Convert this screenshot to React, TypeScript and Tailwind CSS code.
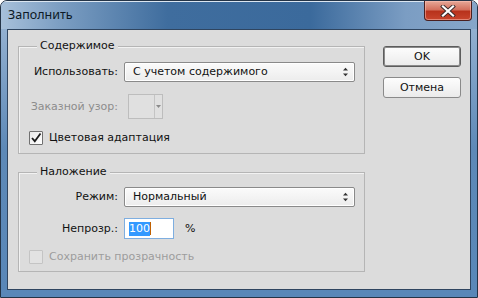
import React from "react";

const UpDown = () => (
  <svg width="7" height="10" viewBox="0 0 7 10" className="shrink-0">
    <path d="M3.5 0.8 L6 3.5 L1 3.5 Z" fill="#333" />
    <path d="M1 6.5 L6 6.5 L3.5 9.2 Z" fill="#333" />
  </svg>
);

const Select = ({ text }: { text: string }) => (
  <div className="flex h-[20px] w-[231px] items-center justify-between rounded-[2px] border border-[#8a8a8a] bg-gradient-to-b from-[#fbfbfb] to-[#ececec] pl-[8px] pr-[5px] shadow-[inset_0_0_0_1px_#ffffff]">
    <span>{text}</span>
    <UpDown />
  </div>
);

const Check = ({ checked, disabled }: { checked?: boolean; disabled?: boolean }) => (
  <div
    className={
      "flex h-[14px] w-[14px] items-center justify-center rounded-[1px] border " +
      (disabled
        ? "border-[#c4c4c4] bg-[#e2e2e2]"
        : "border-[#707070] bg-gradient-to-br from-[#e8e8e8] to-[#ffffff]")
    }
  >
    {checked && (
      <svg width="12" height="12" viewBox="0 0 12 12">
        <path d="M2 6 L4.8 9.2 L10.5 1.5" fill="none" stroke="#1c1c1c" strokeWidth="1.8" />
      </svg>
    )}
  </div>
);

export default function App() {
  return (
    <div
      className="flex h-[298px] w-[478px] flex-col overflow-hidden rounded-t-[7px] border border-[#243447] bg-gradient-to-b from-[#9fb9d6] via-[#5d89b7] to-[#5987b8] text-[11px] leading-[14px] text-[#111]"
      style={{ fontFamily: '"DejaVu Sans", Tahoma, sans-serif' }}
    >
      {/* title bar */}
      <div className="relative flex h-[28px] shrink-0 items-start border-t border-[#dbe6f1] bg-[linear-gradient(90deg,#a7c0da_0%,#7d9fc3_12%,#3f6d9e_35%,#3b6a9c_65%,#7b9dc3_85%,#86a6c9_100%)]">
        <div
          className="ml-[7px] mt-[5px] text-[12.5px] leading-[16px] text-[#0d1a26]"
          style={{ fontFamily: '"Noto Sans", "Open Sans", sans-serif' }}
        >
          Заполнить
        </div>
        <div className="absolute right-[5px] top-[-1px] flex h-[20px] w-[48px] items-center justify-center rounded-b-[4px] border border-t-0 border-[#4a2020] bg-[linear-gradient(180deg,#e6a898_0%,#d3715e_45%,#b8321c_55%,#c8452d_100%)] shadow-[inset_0_0_0_1px_rgba(255,200,190,0.5)]">
          <svg width="16" height="12" viewBox="0 0 16 12">
            <path d="M3 1.5 L13 10.5 M13 1.5 L3 10.5" stroke="#3a2a2a" strokeWidth="4" strokeLinecap="square" />
            <path d="M3 1.5 L13 10.5 M13 1.5 L3 10.5" stroke="#ffffff" strokeWidth="2.2" strokeLinecap="square" />
          </svg>
        </div>
      </div>

      {/* client area */}
      <div className="mx-[6px] mb-[7px] flex flex-1 border border-[#2f4560] bg-[#dcdcdc]">
        <div className="flex flex-1 pl-[10px] pr-[9px] pt-[16px]">
          <div className="flex w-[347px] flex-col gap-[18px]">
            {/* group 1 */}
            <div className="relative flex flex-col border border-[#b5b5b5] pb-[8px] pt-[15px] shadow-[inset_1px_1px_0_#f2f2f2]">
              <div className="absolute left-[18px] top-[-8px] bg-[#dcdcdc] px-[3px]">Содержимое</div>
              <div className="flex items-center">
                <div className="w-[99px] text-right">Использовать:</div>
                <div className="ml-[6px]">
                  <Select text="С учетом содержимого" />
                </div>
              </div>
              <div className="mt-[12px] flex items-center">
                <div className="w-[99px] text-right text-[#8c8c8c]">Заказной узор:</div>
                <div className="ml-[10px] flex h-[25px] w-[35px] border border-[#bdbdbd] bg-[#e0e0e0]">
                  <div className="w-[26px] border-r border-[#c4c4c4]" />
                  <div className="flex flex-1 items-center justify-center">
                    <svg width="5" height="3" viewBox="0 0 5 3">
                      <path d="M0 0 L5 0 L2.5 3 Z" fill="#8a8a8a" />
                    </svg>
                  </div>
                </div>
              </div>
              <div className="mt-[12px] flex h-[14px] items-center pl-[10px]">
                <Check checked />
                <span className="ml-[6px]">Цветовая адаптация</span>
              </div>
            </div>

            {/* group 2 */}
            <div className="relative flex flex-col border border-[#b5b5b5] pb-[7px] pt-[14px] shadow-[inset_1px_1px_0_#f2f2f2]">
              <div className="absolute left-[18px] top-[-8px] bg-[#dcdcdc] px-[3px]">Наложение</div>
              <div className="flex items-center">
                <div className="w-[99px] text-right">Режим:</div>
                <div className="ml-[6px]">
                  <Select text="Нормальный" />
                </div>
              </div>
              <div className="mt-[11px] flex items-center">
                <div className="w-[99px] text-right">Непрозр.:</div>
                <div className="ml-[6px] flex h-[21px] w-[50px] items-center border border-[#7eaee0] bg-white pl-[4px]">
                  <span className="bg-[#3399ff] text-white">100</span>
                  <span className="h-[13px] w-[1px] bg-[#c06000]" />
                </div>
                <span className="ml-[11px]">%</span>
              </div>
              <div className="mt-[11px] flex h-[14px] items-center pl-[10px]">
                <Check disabled />
                <span className="ml-[6px] text-[#9c9c9c]">Сохранить прозрачность</span>
              </div>
            </div>
          </div>

          {/* buttons */}
          <div className="ml-[18px] flex w-[78px] flex-col gap-[10px]">
            <div className="flex h-[21px] items-center justify-center rounded-[3px] border border-[#5c5c5c] bg-gradient-to-b from-[#fdfdfd] to-[#ebebeb] shadow-[inset_0_0_0_1px_#8a8a8a]">
              OK
            </div>
            <div className="flex h-[21px] items-center justify-center rounded-[3px] border border-[#8a8a8a] bg-gradient-to-b from-[#fdfdfd] to-[#ebebeb]">
              Отмена
            </div>
          </div>
        </div>
      </div>
    </div>
  );
}
